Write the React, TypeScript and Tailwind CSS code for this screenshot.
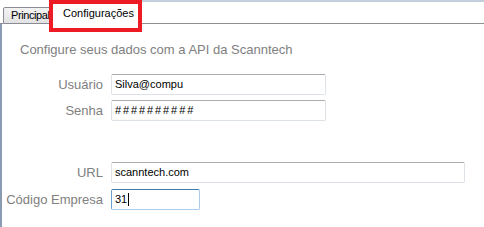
const font = { fontFamily: '"Liberation Sans", Arial, sans-serif' };

function Field({
  label,
  value,
  width,
  focused,
  mono,
}: {
  label: string;
  value: string;
  width: string;
  focused?: boolean;
  mono?: boolean;
}) {
  return (
    <div className="flex items-center">
      <div className="w-[102px] pr-[1px] text-right text-[13px] leading-[15px] text-[#808080]">{label}</div>
      <div
        className={
          "ml-[7px] flex h-[21px] items-center rounded-[2px] border bg-white pl-[3px] text-[11px] text-black " +
          width +
          (focused
            ? " border-[#a9cbea] border-t-[#3d7bad] border-l-[#6f9fcd]"
            : " border-[#dde2e8] border-t-[#abadb3]")
        }
      >
        <span className={mono ? "tracking-[1.9px]" : ""}>{value}</span>
        {focused && <span className="ml-[1px] h-[13px] w-[1px] bg-black" />}
      </div>
    </div>
  );
}

export default function App() {
  return (
    <div className="relative flex h-[227px] w-[484px] flex-col overflow-hidden bg-white" style={font}>
      {/* tab strip */}
      <div className="flex h-[24px] items-end">
        <div className="h-full w-[3px] border-b border-[#898c95]" />
        <div className="flex h-[17px] w-[48px] items-center overflow-hidden whitespace-nowrap rounded-t-[2px] border border-[#898c95] bg-gradient-to-b from-[#f3f3f3] to-[#e2e2e2] pl-[7px] text-[11px] tracking-[-0.4px] text-black">
          Principal
        </div>
        <div className="flex h-[22px] w-[90px] items-center rounded-t-[2px] border border-b-0 border-[#898c95] bg-white pl-[11px] text-[11px] text-black">
          Configurações
        </div>
        <div className="h-full flex-1 border-b border-t-2 border-b-[#8e8f8f] border-t-[#c3cfdc]" />
      </div>

      {/* panel */}
      <div className="flex flex-1 flex-col border-l-2 border-[#8a9ab0] pt-[18px]">
        <div className="pl-[18px] text-[13px] leading-[15px] text-[#808080]">
          Configure seus dados com a API da Scanntech
        </div>
        <div className="mt-[17px] flex flex-col gap-[5px]">
          <Field label="Usuário" value="Silva@compu" width="w-[215px]" />
          <Field label="Senha" value="##########" width="w-[215px]" mono />
        </div>
        <div className="mt-[41px] flex flex-col gap-[6px]">
          <Field label="URL" value="scanntech.com" width="w-[354px]" />
          <Field label="Código Empresa" value="31" width="w-[89px]" focused />
        </div>
      </div>

      {/* annotation */}
      <div className="pointer-events-none absolute left-[49px] top-0 h-[32px] w-[93px] border-[4px] border-[#ed1c24]" />
    </div>
  );
}
